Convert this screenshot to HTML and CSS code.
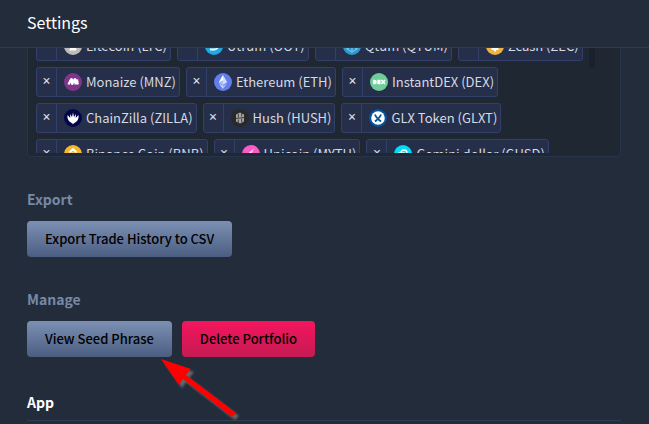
FILE: index.html
```html
<!DOCTYPE html>
<html lang="en">
<head>
<meta charset="utf-8">
<title>Settings</title>
<link rel="stylesheet" href="styles.css">
</head>
<body>
<header class="topbar"><h1>Settings</h1></header>
<main class="content">
  <section class="panel">
    <div class="scroller">
      <ul class="tags">
        <li class="tag"><button class="remove" aria-label="Remove Litecoin">×</button><svg class="coin" viewBox="0 0 18 18"><circle cx="9" cy="9" r="9" fill="#bfbbbb"/><path d="M7.500 4h2.500l-1.500 7h4l-.6 2.500H5.500z" fill="#fff"/></svg><span>Litecoin (LTC)</span></li>
        <li class="tag"><button class="remove" aria-label="Remove Utrum">×</button><svg class="coin" viewBox="0 0 18 18"><circle cx="9" cy="9" r="9" fill="#22a8e2"/><path d="M5 12.500h4.500q3.500-.5 3.500-4T9 5M6 5v5" fill="none" stroke="#fff" stroke-width="1.800"/></svg><span>Utrum (OOT)</span></li>
        <li class="tag"><button class="remove" aria-label="Remove Qtum">×</button><svg class="coin" viewBox="0 0 18 18"><circle cx="9" cy="9" r="9" fill="#2e9ad0"/><path d="M9 3l5 3v6l-5 3-5-3V6zM4 6l5 3 5-3M9 9v6M4 12l5-3 5 3" fill="none" stroke="#9bd0ee" stroke-width=".8"/></svg><span>Qtum (QTUM)</span></li>
        <li class="tag"><button class="remove" aria-label="Remove Zcash">×</button><svg class="coin" viewBox="0 0 18 18"><circle cx="9" cy="9" r="9" fill="#ecb244"/><path d="M5.500 5h7v2.500L10 11h2.500v2H10v1.500H8V13H5.500v-2L9 7H5.500z" fill="#fff"/></svg><span>Zcash (ZEC)</span></li>
        <li class="tag"><button class="remove" aria-label="Remove Monaize">×</button><svg class="coin" viewBox="0 0 18 18"><circle cx="9" cy="9" r="9" fill="#7f368a"/><path d="M4.500 11.500L7 6.500q1-1 1 .5v4.500l2.500-5q1-1 1 .5v4.500M13 6.500l.8 5" fill="none" stroke="#fff" stroke-width="2.200"/></svg><span>Monaize (MNZ)</span></li>
        <li class="tag"><button class="remove" aria-label="Remove Ethereum">×</button><svg class="coin" viewBox="0 0 18 18"><circle cx="9" cy="9" r="9" fill="#627eea"/><path d="M9 2L4.800 9.200 9 11.700z" fill="#fff"/><path d="M9 2l4.200 7.200L9 11.700zM4.800 10.200L9 16v-3.300z" fill="#d5ddfb"/><path d="M13.200 10.200L9 16v-3.300zM4.800 9.200L9 7.300v4.400z" fill="#aabaf5"/></svg><span>Ethereum (ETH)</span></li>
        <li class="tag"><button class="remove" aria-label="Remove InstantDEX">×</button><svg class="coin" viewBox="0 0 18 18"><circle cx="9" cy="9" r="9" fill="#70cc98"/><path d="M3 6.800h1.500q2.300 0 2.300 2.200t-2.300 2.200H3zM7.300 6.800h3.200v4.400H7.300z" fill="#fff"/><path d="M11.300 7l3.700 4m0-4l-3.700 4" stroke="#fff" stroke-width="1.700"/></svg><span>InstantDEX (DEX)</span></li>
        <li class="tag"><button class="remove" aria-label="Remove ChainZilla">×</button><svg class="coin" viewBox="0 0 18 18"><circle cx="9" cy="9" r="9" fill="#04064a"/><path d="M3.500 6l2.800 3-.3-4 2 3 1-4.500L10 8l2-3-.3 4 2.800-3q.5 4-2 6.500L9 15l-3.500-2.500Q3 10 3.500 6z" fill="#fff"/></svg><span>ChainZilla (ZILLA)</span></li>
        <li class="tag"><button class="remove" aria-label="Remove Hush">×</button><svg class="coin" viewBox="0 0 18 18"><circle cx="9" cy="9" r="9" fill="#292929"/><path d="M5 5.500L9 3.500l4 2v7l-4 2-4-2z" fill="#a5a5a5"/><path d="M7.300 5v3.500m0 2v3.500M10.700 4v3.500m0 2V13M5 9.500l8-1" stroke="#292929" stroke-width=".8"/></svg><span>Hush (HUSH)</span></li>
        <li class="tag"><button class="remove" aria-label="Remove GLX Token">×</button><svg class="coin" viewBox="0 0 18 18"><circle cx="9" cy="9" r="9" fill="#07539b"/><circle cx="9" cy="9" r="6.800" fill="#fff"/><path d="M6 5.500q1 3 6 7M12 5.500q-1 3-6 7" fill="none" stroke="#07539b" stroke-width="1.800"/></svg><span>GLX Token (GLXT)</span></li>
        <li class="tag"><button class="remove" aria-label="Remove Binance Coin">×</button><svg class="coin" viewBox="0 0 18 18"><circle cx="9" cy="9" r="9" fill="#f3ba2f"/><path d="M5.500 7.500L9 4l3.500 3.500M5.500 10.500L9 14l3.500-3.500" fill="none" stroke="#fff" stroke-width="1.800"/><path d="M9 7.200L10.800 9 9 10.800 7.200 9z" fill="#fff"/></svg><span>Binance Coin (BNB)</span></li>
        <li class="tag"><button class="remove" aria-label="Remove Unicoin">×</button><svg class="coin" viewBox="0 0 18 18"><circle cx="9" cy="9" r="9" fill="#f95cc5"/><path d="M12 3.500L10 7.500l2 4-3-1-3 3 1-6z" fill="#ffd0ef"/></svg><span>Unicoin (MYTH)</span></li>
        <li class="tag"><button class="remove" aria-label="Remove Gemini dollar">×</button><svg class="coin" viewBox="0 0 18 18"><circle cx="9" cy="9" r="9" fill="#00dcfa"/><path d="M7 8q0-3 3-3t3 3-3 3M5 8h5v3q0 2-2 2t-3-2z" fill="none" stroke="#fff" stroke-width="1.300"/></svg><span>Gemini dollar (GUSD)</span></li>
      </ul>
      <div class="thumb"></div>
    </div>
  </section>
  <section class="group">
    <h2>Export</h2>
    <div class="actions"><button class="btn">Export Trade History to CSV</button></div>
  </section>
  <section class="group">
    <h2>Manage</h2>
    <div class="actions">
      <button class="btn">View Seed Phrase</button>
      <button class="btn danger">Delete Portfolio</button>
      <svg class="arrow" viewBox="0 0 84 64" aria-hidden="true">
        <path class="arrow-shadow" d="M4 3L34 13l-5 6 50 38-4 4-49-38-4 6z"/>
        <path d="M1 0L31 10l-5 6 50 38-4 4-49-38-4 6z" fill="#f00"/>
      </svg>
    </div>
  </section>
  <h2 class="section-title">App</h2>
</main>
</body>
</html>
```

FILE: styles.css
```css
* { box-sizing: border-box; }
body {
  margin: 0;
  height: 100vh;
  overflow: hidden;
  background: #232c3b;
  color: #fff;
  font: 13px/20px "Noto Sans CJK SC", "Noto Sans", sans-serif;
}
button { font: inherit; }
h1, h2 { margin: 0; font-weight: 400; }
.topbar {
  height: 48px;
  padding: 10px 27px 0;
  border-bottom: 1px solid #303c4c;
}
.topbar h1 { font-size: 16px; line-height: 24px; }
.content { padding: 0 28px 0 27px; }
.panel {
  padding: 0 25px 3px 8px;
  border: 1px solid #27334a;
  border-top: 0;
  border-radius: 0 0 4px 4px;
  background: #1f2832;
}
.scroller {
  position: relative;
  height: 105px;
  overflow: hidden;
}
.tags {
  display: flex;
  flex-wrap: wrap;
  align-content: flex-start;
  gap: 6px;
  margin: -17px 0 0;
  padding: 0;
  list-style: none;
}
.thumb {
  position: absolute;
  top: 0;
  right: 0;
  width: 6px;
  height: 20px;
  border-radius: 0 0 3px 3px;
  background: #1a212c;
}
.tag {
  display: flex;
  align-items: center;
  height: 30px;
  padding-right: 3px;
  border: 1px solid #323f6b;
  border-radius: 3px;
  background: #252f49;
  color: #d6dae2;
  white-space: nowrap;
}
.remove {
  width: 20px;
  height: 28px;
  padding: 0 0 2px;
  border: 0;
  border-right: 1px solid #323f6b;
  background: none;
  color: #d6dae2;
  font-family: "Noto Sans", sans-serif;
  font-size: 14px;
  font-weight: 500;
}
.coin {
  flex: none;
  width: 18px;
  height: 18px;
  margin: 0 4px 0 7px;
}
.group { padding-top: 32px; }
.group h2 {
  color: #7689a5;
  font-size: 14px;
  font-weight: 700;
  line-height: 20px;
}
.actions {
  position: relative;
  display: flex;
  gap: 10px;
  padding-top: 12px;
}
.btn {
  height: 36px;
  padding: 0 18px;
  border: 0;
  border-radius: 4px;
  background: linear-gradient(#7c90b3, #4b5e81);
  color: #000;
  font-weight: 500;
}
.danger { background: linear-gradient(#f5155d, #c41b53); }
.arrow {
  position: absolute;
  left: 133px;
  top: 50px;
  width: 84px;
  height: 64px;
}
.arrow-shadow { fill: #666; filter: blur(1px); }
.section-title {
  margin-top: 35px;
  padding-bottom: 8px;
  border-bottom: 1px solid #303f50;
  font-size: 14px;
  font-weight: 700;
  line-height: 20px;
}
```
